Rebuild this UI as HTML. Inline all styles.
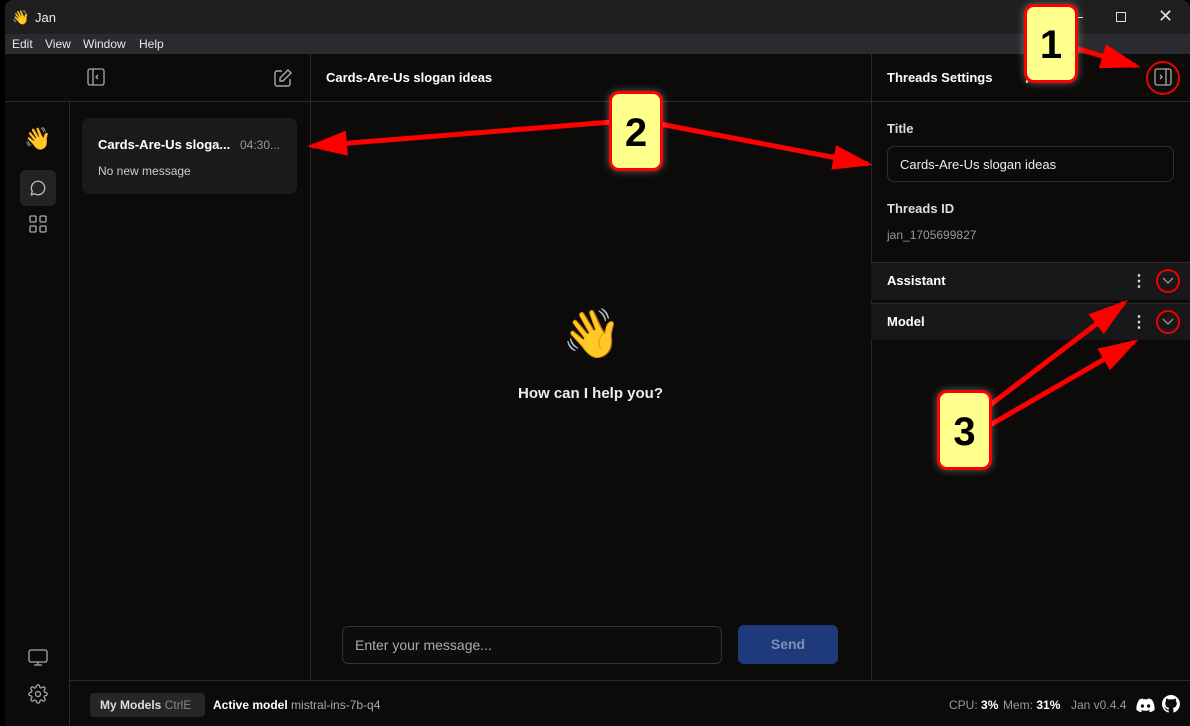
<!DOCTYPE html>
<html><head><meta charset="utf-8"><style>
*{margin:0;padding:0;box-sizing:border-box}
body{width:1190px;height:726px;overflow:hidden;background:#000;font-family:"Liberation Sans","Noto Sans CJK JP",sans-serif;color:#fff;position:relative}
.abs{position:absolute}
.win{left:5px;top:0;width:1185px;height:726px;background:#0c0b0a;border-radius:8px 8px 0 0;overflow:hidden}
.title{left:5px;top:0;width:1185px;height:34px;background:#1f1f1f;border-radius:8px 8px 0 0}
.menu{left:5px;top:34px;width:1185px;height:20px;background:#2a2b2e;font-size:12px;color:#e8e8e8}
.menu span{position:absolute;top:3px}
.line{background:#2a2a2a}
.b{font-weight:bold}
.ann{background:#ffff8c;border:3px solid #f00;border-radius:10px;box-shadow:0 0 8px rgba(255,255,255,.35);color:#000;font-weight:bold;font-size:40px;text-align:center}
</style></head><body>
<div class="abs win"></div>
<div class="abs title"></div>
<div class="abs" style="left:12px;top:9px;font-size:14px">👋</div>
<div class="abs" style="left:35px;top:10px;font-size:13px;color:#eee">Jan</div>
<div class="abs" style="left:1073px;top:17px;width:10px;height:1px;background:#ddd"></div>
<div class="abs" style="left:1116px;top:12px;width:10px;height:10px;border:1.3px solid #ddd"></div>
<div class="abs" style="left:1158px;top:6px;font-size:18px;color:#ddd">✕</div>
<div class="abs menu"><span style="left:7px">Edit</span><span style="left:40px">View</span><span style="left:78px">Window</span><span style="left:134px">Help</span></div>

<!-- lines -->
<div class="abs line" style="left:5px;top:101px;width:866px;height:1px"></div>
<div class="abs line" style="left:871px;top:101px;width:319px;height:1px"></div>
<div class="abs line" style="left:69px;top:101px;width:1px;height:625px"></div>
<div class="abs line" style="left:310px;top:54px;width:1px;height:626px"></div>
<div class="abs line" style="left:871px;top:54px;width:1px;height:626px"></div>
<div class="abs line" style="left:69px;top:680px;width:1121px;height:1px"></div>

<!-- header icons -->
<svg class="abs" style="left:87px;top:68px" width="18" height="18" viewBox="0 0 18 18" fill="none" stroke="#aaa" stroke-width="1.3"><rect x="1" y="1" width="16" height="16" rx="2"/><path d="M6 1v16M11 7l-2 2 2 2"/></svg>
<svg class="abs" style="left:273px;top:68px" width="20" height="20" viewBox="0 0 20 20" fill="none" stroke="#aaa" stroke-width="1.4"><path d="M9 3H4a2 2 0 0 0-2 2v11a2 2 0 0 0 2 2h11a2 2 0 0 0 2-2v-5"/><path d="M15 2l3 3-8 8H7v-3z"/></svg>
<div class="abs b" style="left:326px;top:70px;font-size:13px">Cards-Are-Us slogan ideas</div>

<!-- rail -->
<div class="abs" style="left:24px;top:126px;font-size:22px">👋</div>
<div class="abs" style="left:20px;top:170px;width:36px;height:36px;background:#242322;border-radius:6px"></div>
<svg class="abs" style="left:29px;top:179px" width="18" height="18" viewBox="0 0 16 16" fill="none" stroke="#bbb" stroke-width="1.2"><path d="M8 2a6 6 0 1 1-3 11.2L2 14l.9-3A6 6 0 0 1 8 2z"/></svg>
<svg class="abs" style="left:29px;top:215px" width="18" height="18" viewBox="0 0 18 18" fill="none" stroke="#aaa" stroke-width="1.3"><rect x="1" y="1" width="6" height="6" rx="1"/><rect x="11" y="1" width="6" height="6" rx="1"/><rect x="1" y="11" width="6" height="6" rx="1"/><rect x="11" y="11" width="6" height="6" rx="1"/></svg>
<svg class="abs" style="left:28px;top:649px" width="20" height="18" viewBox="0 0 20 18" fill="none" stroke="#aaa" stroke-width="1.3"><rect x="1" y="1" width="18" height="12" rx="2"/><path d="M10 13v3M6 16h8"/></svg>
<svg class="abs" style="left:28px;top:684px" width="20" height="20" viewBox="0 0 24 24" fill="none" stroke="#aaa" stroke-width="1.5"><circle cx="12" cy="12" r="3"/><path d="M19.4 15a1.7 1.7 0 0 0 .3 1.8l.1.1a2 2 0 1 1-2.8 2.8l-.1-.1a1.7 1.7 0 0 0-1.8-.3 1.7 1.7 0 0 0-1 1.5V21a2 2 0 1 1-4 0v-.1a1.7 1.7 0 0 0-1.1-1.5 1.7 1.7 0 0 0-1.8.3l-.1.1a2 2 0 1 1-2.8-2.8l.1-.1a1.7 1.7 0 0 0 .3-1.8 1.7 1.7 0 0 0-1.5-1H3a2 2 0 1 1 0-4h.1a1.7 1.7 0 0 0 1.5-1.1 1.7 1.7 0 0 0-.3-1.8l-.1-.1a2 2 0 1 1 2.8-2.8l.1.1a1.7 1.7 0 0 0 1.8.3H9a1.7 1.7 0 0 0 1-1.5V3a2 2 0 1 1 4 0v.1a1.7 1.7 0 0 0 1 1.5 1.7 1.7 0 0 0 1.8-.3l.1-.1a2 2 0 1 1 2.8 2.8l-.1.1a1.7 1.7 0 0 0-.3 1.8V9a1.7 1.7 0 0 0 1.5 1H21a2 2 0 1 1 0 4h-.1a1.7 1.7 0 0 0-1.5 1z"/></svg>

<!-- thread card -->
<div class="abs" style="left:82px;top:118px;width:215px;height:76px;background:#1c1a19;border-radius:8px"></div>
<div class="abs b" style="left:98px;top:137px;font-size:13px">Cards-Are-Us sloga...</div>
<div class="abs" style="left:240px;top:138px;font-size:12px;color:#999">04:30...</div>
<div class="abs" style="left:98px;top:164px;font-size:12px;color:#ccc">No new message</div>

<!-- center -->
<div class="abs" style="left:562px;top:305px;font-size:48px">👋</div>
<div class="abs b" style="left:310px;top:385px;width:561px;text-align:center;font-size:15px;color:#eee">How can I help you?</div>
<div class="abs" style="left:342px;top:626px;width:380px;height:38px;border:1px solid #333;border-radius:6px;background:#0e0d0c"></div>
<div class="abs" style="left:355px;top:637px;font-size:14px;color:#aaa">Enter your message...</div>
<div class="abs b" style="left:738px;top:625px;width:100px;height:39px;background:#1e3a7a;border-radius:6px;color:#7f90b8;font-size:14px;text-align:center;line-height:39px">Send</div>

<!-- right panel -->
<div class="abs b" style="left:887px;top:70px;font-size:13px">Threads Settings</div>
<div class="abs b" style="left:1019px;top:66px;font-size:16px;color:#ccc">⋮</div>
<svg class="abs" style="left:1154px;top:68px" width="18" height="18" viewBox="0 0 18 18" fill="none" stroke="#aaa" stroke-width="1.3"><rect x="1" y="1" width="16" height="16" rx="2"/><path d="M12 1v16M6 7l2 2-2 2"/></svg>
<div class="abs" style="left:1146px;top:61px;width:34px;height:34px;border:2.5px solid #e00;border-radius:50%"></div>
<div class="abs b" style="left:887px;top:121px;font-size:13px;color:#ddd">Title</div>
<div class="abs" style="left:887px;top:146px;width:287px;height:36px;border:1px solid #2e2e2e;border-radius:7px"></div>
<div class="abs" style="left:900px;top:157px;font-size:13px;color:#eee">Cards-Are-Us slogan ideas</div>
<div class="abs b" style="left:887px;top:201px;font-size:13px;color:#ddd">Threads ID</div>
<div class="abs" style="left:887px;top:228px;font-size:12px;color:#999">jan_1705699827</div>
<div class="abs" style="left:871px;top:262px;width:319px;height:38px;background:#18181b;border-top:1px solid #2a2a2a"></div>
<div class="abs" style="left:871px;top:303px;width:319px;height:37px;background:#18181b;border-top:1px solid #2a2a2a"></div>
<div class="abs b" style="left:887px;top:273px;font-size:13px">Assistant</div>
<div class="abs b" style="left:887px;top:314px;font-size:13px">Model</div>
<div class="abs b" style="left:1131px;top:271px;font-size:16px;color:#ddd">⋮</div>
<div class="abs b" style="left:1131px;top:312px;font-size:16px;color:#ddd">⋮</div>
<div class="abs" style="left:1156px;top:269px;width:24px;height:24px;border:2.5px solid #e00;border-radius:50%"></div>
<div class="abs" style="left:1156px;top:310px;width:24px;height:24px;border:2.5px solid #e00;border-radius:50%"></div>
<svg class="abs" style="left:1162px;top:277px" width="12" height="8"><path d="M1 1l5 5 5-5" fill="none" stroke="#999" stroke-width="1.3"/></svg>
<svg class="abs" style="left:1162px;top:318px" width="12" height="8"><path d="M1 1l5 5 5-5" fill="none" stroke="#999" stroke-width="1.3"/></svg>

<!-- bottom bar -->
<div class="abs" style="left:90px;top:693px;width:115px;height:24px;background:#262626;border-radius:4px"></div>
<div class="abs" style="left:100px;top:698px;font-size:12px"><b style="color:#ddd">My Models</b> <span style="color:#888">CtrlE</span></div>
<div class="abs" style="left:213px;top:698px;font-size:12px"><b>Active model</b> <span style="color:#aaa">mistral-ins-7b-q4</span></div>
<div class="abs" style="left:949px;top:698px;font-size:12px;color:#999">CPU: <b style="color:#fff">3%</b></div>
<div class="abs" style="left:1003px;top:698px;font-size:12px;color:#999">Mem: <b style="color:#fff">31%</b></div>
<div class="abs" style="left:1071px;top:698px;font-size:12px;color:#999">Jan v0.4.4</div>
<svg class="abs" style="left:1136px;top:698px" width="19" height="15" viewBox="0 0 24 18"><path fill="#fff" d="M20 1.5A19 19 0 0 0 15.3 0l-.6 1.2a18 18 0 0 0-5.4 0L8.7 0A19 19 0 0 0 4 1.5C1 6 .2 10.4.6 14.7A19 19 0 0 0 6.4 17.6l1.2-2a12 12 0 0 1-1.9-.9l.5-.4a13.5 13.5 0 0 0 11.6 0l.5.4a12 12 0 0 1-1.9.9l1.2 2a19 19 0 0 0 5.8-2.9C23.9 9.7 22.7 5.3 20 1.5zM8.1 12c-1.1 0-2.1-1-2.1-2.3s.9-2.3 2.1-2.3 2.1 1 2.1 2.3S9.3 12 8.1 12zm7.8 0c-1.1 0-2.1-1-2.1-2.3s.9-2.3 2.1-2.3 2.1 1 2.1 2.3-.9 2.3-2.1 2.3z"/></svg>
<svg class="abs" style="left:1162px;top:695px" width="18" height="18" viewBox="0 0 16 16"><path fill="#fff" d="M8 0a8 8 0 0 0-2.5 15.6c.4 0 .5-.2.5-.4v-1.5c-2.2.5-2.7-1-2.7-1-.4-.9-.9-1.2-.9-1.2-.7-.5.1-.5.1-.5.8.1 1.2.8 1.2.8.7 1.3 1.9.9 2.3.7.1-.5.3-.9.5-1.1-1.8-.2-3.6-.9-3.6-4 0-.9.3-1.6.8-2.1-.1-.2-.4-1 .1-2.1 0 0 .7-.2 2.2.8a7.5 7.5 0 0 1 4 0c1.5-1 2.2-.8 2.2-.8.4 1.1.2 1.9.1 2.1.5.6.8 1.3.8 2.1 0 3.1-1.9 3.8-3.6 4 .3.3.6.8.6 1.5v2.2c0 .2.1.5.6.4A8 8 0 0 0 8 0z"/></svg>

<!-- arrows -->
<svg class="abs" style="left:0;top:0" width="1190" height="726">
<defs><marker id="ah" markerWidth="8" markerHeight="5" refX="7" refY="2.5" orient="auto" markerUnits="strokeWidth"><path d="M0 0L8 2.5 0 5z" fill="#f00"/></marker></defs>
<g stroke="#f00" stroke-width="5" fill="none" marker-end="url(#ah)">
<line x1="1075" y1="48" x2="1136" y2="66"/>
<line x1="612" y1="122" x2="312" y2="146"/>
<line x1="660" y1="124" x2="868" y2="164"/>
<line x1="990" y1="405" x2="1124" y2="303"/>
<line x1="990" y1="425" x2="1134" y2="342"/>
</g></svg>
<div class="abs ann" style="left:1024px;top:4px;width:54px;height:79px;line-height:76px">1</div>
<div class="abs ann" style="left:609px;top:91px;width:54px;height:80px;line-height:78px">2</div>
<div class="abs ann" style="left:937px;top:390px;width:55px;height:80px;line-height:78px">3</div>
</body></html>
